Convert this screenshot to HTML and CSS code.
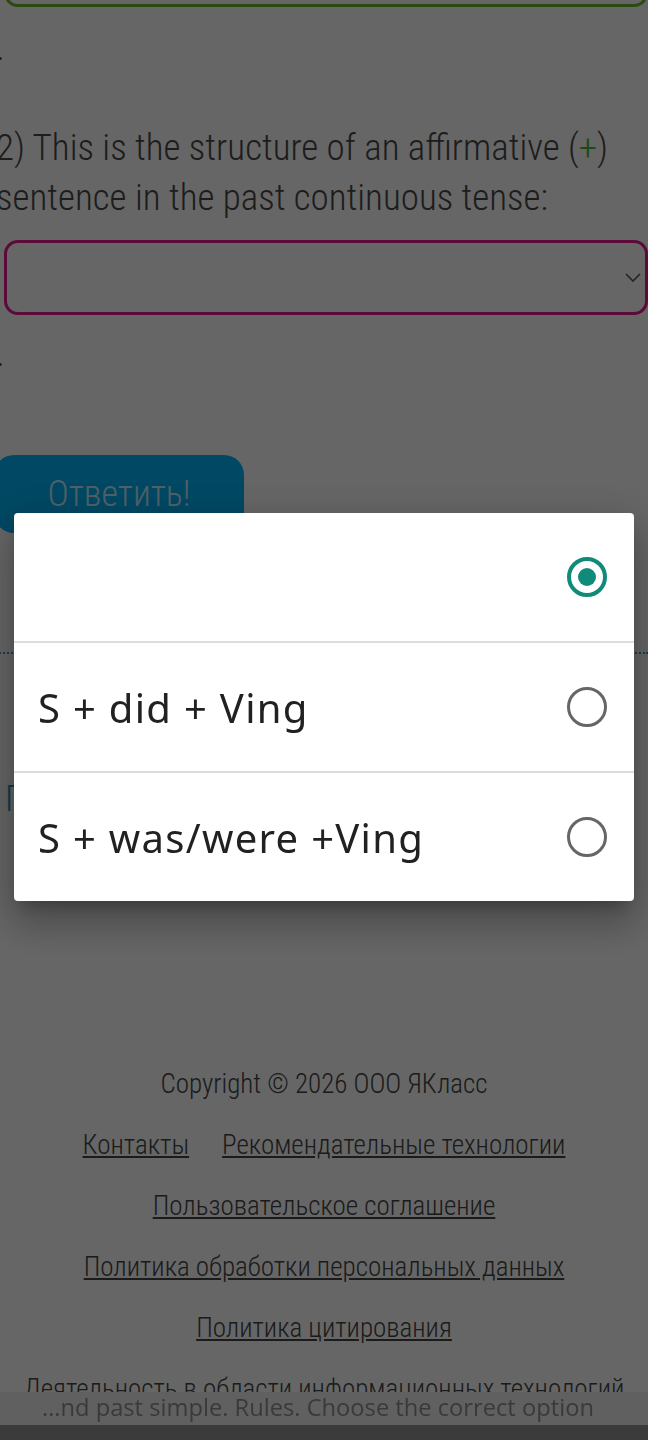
FILE: index.html
```html
<!DOCTYPE html>
<html lang="ru">
<head>
    <meta charset="UTF-8">
    <title>Past continuous and past simple. Rules</title>
    <link rel="stylesheet" href="styles.css">
</head>
<body>
<div class="page">
    <div class="task">
        <div class="prev-answer"></div>
        <p class="gap gap-top">.</p>
        <p class="question">2) This is the structure of an affirmative (<span class="plus">+</span>) sentence in the past continuous tense:</p>
        <div class="select">
            <svg class="chevron" width="16" height="9" viewBox="0 0 16 9">
                <polyline points="1,1 8,8 15,1" fill="none" stroke="#555" stroke-width="1.6"/>
            </svg>
        </div>
        <p class="gap gap-bottom">.</p>
        <button class="submit">Ответить!</button>
        <div class="sep"></div>
        <a class="next-link" href="#">Показать теорию</a>
    </div>

    <div class="footer">
        <p class="copy">Copyright © 2026 ООО ЯКласс</p>
        <p><a href="#">Контакты</a><a href="#">Рекомендательные технологии</a></p>
        <p><a href="#">Пользовательское соглашение</a></p>
        <p><a href="#">Политика обработки персональных данных</a></p>
        <p><a href="#">Политика цитирования</a></p>
        <p>Деятельность в области информационных технологий</p>
    </div>
</div>

<div class="bottom">
    <div class="title-bar">…nd past simple. Rules. Choose the correct option</div>
    <div class="nav-strip"></div>
</div>

<!--затемнение под списком вариантов-->
<div class="dim"></div>

<div class="picker">
    <div class="option">
        <span class="label"></span>
        <span class="radio checked"></span>
    </div>
    <div class="option">
        <span class="label">S + did + Ving</span>
        <span class="radio"></span>
    </div>
    <div class="option">
        <span class="label">S + was/were +Ving</span>
        <span class="radio"></span>
    </div>
</div>
</body>
</html>
```

FILE: styles.css
```css
* {
    box-sizing: border-box;
}

body {
    margin: 0;
    height: 1440px;
    overflow: hidden;
    background: #fff;
    color: #444;
    font-family: "Roboto Condensed", Roboto, sans-serif;
    font-stretch: condensed;
    font-weight: 300;
}

.page {
    width: 648px;
}

.task {
    margin-left: -4px;
}

.prev-answer {
    height: 30px;
    margin: -23px 0 0 8px;
    border: 3px solid #69b92d;
    border-radius: 14px;
}

.gap {
    margin: 0;
    font-size: 37px;
    line-height: 50px;
}

.gap-top {
    margin-top: 16px;
}

.gap-bottom {
    margin-top: 14px;
}

.question {
    margin: 50px 0 0;
    font-size: 37px;
    line-height: 50px;
    color: #4a4a4a;
}

.question .plus {
    color: #45b840;
}

.select {
    height: 75px;
    margin: 17px 0 0 8px;
    border: 3px solid #e61991;
    border-radius: 14px;
    display: flex;
    align-items: center;
    justify-content: flex-end;
    padding-right: 4px;
}

.submit {
    display: block;
    width: 250px;
    height: 78px;
    margin: 76px 0 0 -2px;
    border: 0;
    border-radius: 20px;
    background: #00b4fa;
    color: #c8f0ff;
    font-family: inherit;
    font-stretch: inherit;
    font-weight: 300;
    font-size: 36px;
}

.sep {
    margin-top: 119px;
    border-top: 2px dotted #3aa0c0;
}

.next-link {
    display: block;
    margin: 120px 0 0 9px;
    font-size: 36px;
    line-height: 50px;
    color: #2b8fb0;
    text-decoration: none;
    white-space: nowrap;
}

.footer {
    margin-top: 230px;
    text-align: center;
    font-size: 27px;
    line-height: 61px;
    white-space: nowrap;
}

.footer p {
    margin: 0;
}

.footer a {
    color: #444;
    text-decoration: underline;
}

.footer a + a {
    margin-left: 33px;
}

.bottom {
    position: fixed;
    left: 0;
    right: 0;
    bottom: 0;
}

.title-bar {
    height: 33px;
    padding-right: 12px;
    background: #f0f0f0;
    color: #909090;
    font-family: "Open Sans", sans-serif;
    font-stretch: normal;
    font-weight: 400;
    font-size: 23.7px;
    line-height: 31px;
    text-align: center;
    white-space: nowrap;
}

.nav-strip {
    height: 15px;
    background: #959595;
}

.dim {
    position: fixed;
    top: 0;
    left: 0;
    right: 0;
    bottom: 0;
    background: rgba(0, 0, 0, 0.6);
}

.picker {
    position: fixed;
    top: 513px;
    left: 14px;
    width: 620px;
    background: #fff;
    border-radius: 4px;
    box-shadow: 0 24px 38px 3px rgba(0, 0, 0, 0.18), 0 9px 46px 8px rgba(0, 0, 0, 0.14), 0 11px 15px -7px rgba(0, 0, 0, 0.25);
}

.option {
    display: flex;
    align-items: center;
    justify-content: space-between;
    height: 128px;
    padding: 0 27px 0 24px;
    font-family: "Noto Sans", sans-serif;
    font-stretch: normal;
    font-weight: 400;
    font-size: 40px;
    letter-spacing: 1.3px;
    color: #212121;
}

.option + .option {
    height: 130px;
    border-top: 2px solid #ddd;
}

.radio {
    width: 40px;
    height: 40px;
    border: 3px solid #666;
    border-radius: 50%;
    display: flex;
    align-items: center;
    justify-content: center;
}

.radio.checked {
    border: 4px solid #108a79;
}

.radio.checked::after {
    content: "";
    width: 18px;
    height: 18px;
    border-radius: 50%;
    background: #108a79;
}
```
